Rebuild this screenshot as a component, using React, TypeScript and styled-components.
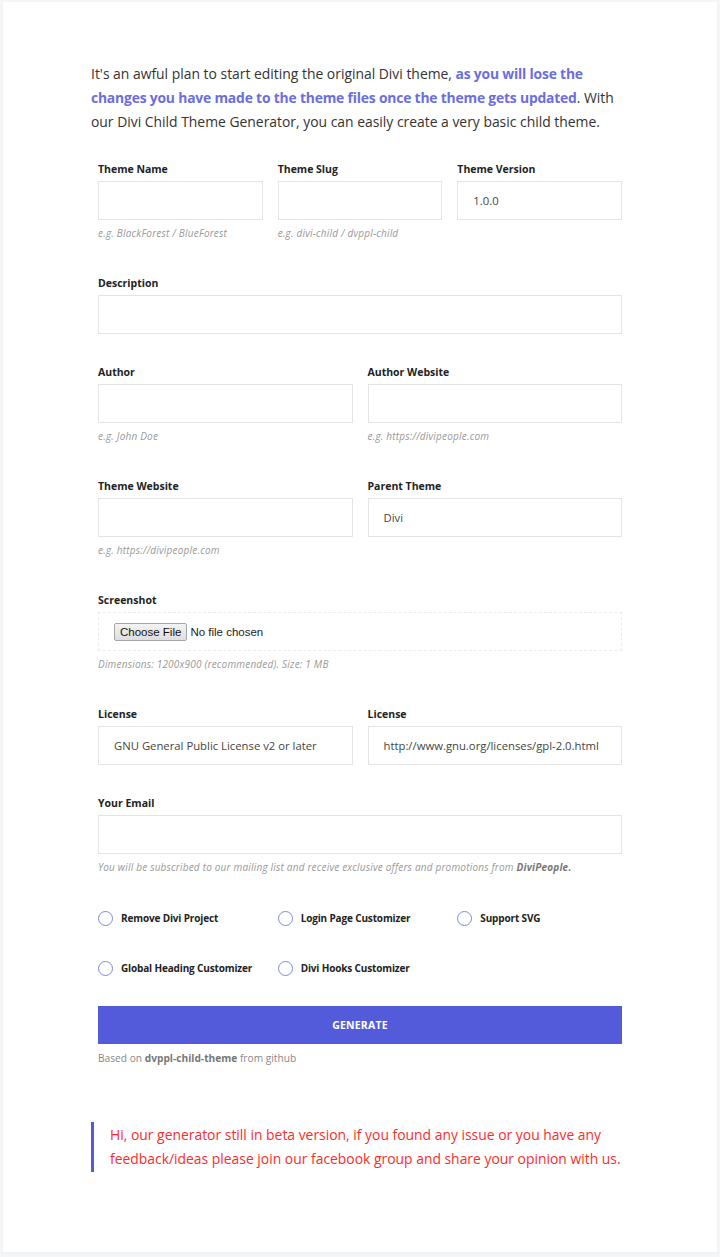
import React from "react";
import styled, { createGlobalStyle } from "styled-components";

const GlobalStyle = createGlobalStyle`
    html, body {
        margin: 0;
        padding: 0;
        background: #f5f6f8;
    }
    body {
        font-family: "Open Sans", "Liberation Sans", sans-serif;
        color: #333;
    }
    * {
        box-sizing: border-box;
    }
`;

const Card = styled.div`
    margin: 2px 3px 7px;
    background: #ffffff;
    box-shadow: 0 1px 4px rgba(0, 0, 0, 0.04);
    padding: 60px 88px 80px 88px;
`;

const Intro = styled.p`
    margin: 0 0 29px;
    font-size: 13.9px;
    line-height: 23.8px;
    color: #333;

    strong {
        color: #6b6ee0;
        font-weight: 700;
        letter-spacing: -0.2px;
    }
`;

const Form = styled.div`
    padding: 0 7px;
    display: flex;
    flex-direction: column;
`;

const Row = styled.div<{ $cols: number; $gap?: number }>`
    display: grid;
    grid-template-columns: repeat(${(p) => p.$cols}, 1fr);
    column-gap: 15px;
    margin-bottom: ${(p) => p.$gap ?? 37}px;
`;

const Field = styled.div`
    display: flex;
    flex-direction: column;
`;

const Label = styled.label`
    font-size: 10.5px;
    font-weight: 700;
    color: #222;
    line-height: 14px;
    margin-bottom: 5px;
`;

const Input = styled.input`
    height: 39px;
    width: 100%;
    border: 1px solid #e4e4e4;
    background: #fff;
    padding: 0 15px;
    font-family: inherit;
    font-size: 11.3px;
    color: #444;
    outline: none;
`;

const FileBox = styled.div`
    height: 39px;
    border: 1px dashed #ececec;
    display: flex;
    align-items: center;
    padding: 0 15px;
    font-family: Arial, "Liberation Sans", sans-serif;
    font-size: 11.5px;
    color: #222;
`;

const FileButton = styled.span`
    display: inline-block;
    padding: 2px 5px;
    border: 1px solid #a6a6a6;
    border-radius: 2px;
    background: linear-gradient(#f3f3f3, #dedede);
    margin-right: 3px;
    color: #111;
`;

const Help = styled.div`
    margin-top: 7px;
    font-size: 10px;
    letter-spacing: 0.2px;
    font-style: italic;
    color: #999;
    line-height: 12px;
    min-height: 12px;

    b {
        color: #777;
        font-weight: 700;
    }
`;

const Options = styled.div`
    display: grid;
    grid-template-columns: repeat(3, 1fr);
    column-gap: 15px;
    row-gap: 32px;
    margin-bottom: 29px;
`;

const Option = styled.label`
    display: flex;
    align-items: center;
    gap: 8px;
    font-size: 10px;
    letter-spacing: -0.15px;
    font-weight: 700;
    color: #222;
    white-space: nowrap;
    line-height: 18px;
`;

const Circle = styled.span`
    width: 15px;
    height: 15px;
    border-radius: 50%;
    border: 1px solid #7f86e6;
    flex: none;
`;

const Generate = styled.button`
    height: 38px;
    width: 100%;
    border: none;
    background: #535bdb;
    color: #fff;
    font-family: inherit;
    font-size: 10.5px;
    font-weight: 700;
    letter-spacing: 0.2px;
`;

const Credit = styled.div`
    margin-top: 7px;
    font-size: 10.2px;
    color: #888;

    b {
        color: #777;
    }
`;

const Note = styled.blockquote`
    margin: 57px 0 0;
    border-left: 3px solid #535bdb;
    padding: 1px 0 1px 16px;
    font-size: 13.9px;
    line-height: 24px;
    color: #ff2a2a;
`;

const Hint = ({ children }: { children?: React.ReactNode }) => <Help>{children}</Help>;

export default function App() {
    return (
        <>
            <GlobalStyle />
            <Card>
                <Intro>
                    It's an awful plan to start editing the original Divi theme,{" "}
                    <strong>
                        as you will lose the changes you have made to the theme files once the
                        theme gets updated
                    </strong>
                    . With our Divi Child Theme Generator, you can easily create a very basic
                    child theme.
                </Intro>

                <Form>
                    <Row $cols={3}>
                        <Field>
                            <Label>Theme Name</Label>
                            <Input />
                            <Hint>e.g. BlackForest / BlueForest</Hint>
                        </Field>
                        <Field>
                            <Label>Theme Slug</Label>
                            <Input />
                            <Hint>e.g. divi-child / dvppl-child</Hint>
                        </Field>
                        <Field>
                            <Label>Theme Version</Label>
                            <Input defaultValue="1.0.0" />
                        </Field>
                    </Row>

                    <Row $cols={1} $gap={31}>
                        <Field>
                            <Label>Description</Label>
                            <Input />
                        </Field>
                    </Row>

                    <Row $cols={2}>
                        <Field>
                            <Label>Author</Label>
                            <Input />
                            <Hint>e.g. John Doe</Hint>
                        </Field>
                        <Field>
                            <Label>Author Website</Label>
                            <Input />
                            <Hint>e.g. https://divipeople.com</Hint>
                        </Field>
                    </Row>

                    <Row $cols={2}>
                        <Field>
                            <Label>Theme Website</Label>
                            <Input />
                            <Hint>e.g. https://divipeople.com</Hint>
                        </Field>
                        <Field>
                            <Label>Parent Theme</Label>
                            <Input defaultValue="Divi" />
                        </Field>
                    </Row>

                    <Row $cols={1}>
                        <Field>
                            <Label>Screenshot</Label>
                            <FileBox>
                                <FileButton>Choose File</FileButton>No file chosen
                            </FileBox>
                            <Hint>Dimensions: 1200x900 (recommended). Size: 1 MB</Hint>
                        </Field>
                    </Row>

                    <Row $cols={2} $gap={31}>
                        <Field>
                            <Label>License</Label>
                            <Input defaultValue="GNU General Public License v2 or later" />
                        </Field>
                        <Field>
                            <Label>License</Label>
                            <Input defaultValue="http://www.gnu.org/licenses/gpl-2.0.html" />
                        </Field>
                    </Row>

                    <Row $cols={1} $gap={36}>
                        <Field>
                            <Label>Your Email</Label>
                            <Input />
                            <Hint>
                                You will be subscribed to our mailing list and receive exclusive
                                offers and promotions from <b>DiviPeople.</b>
                            </Hint>
                        </Field>
                    </Row>

                    <Options>
                        <Option>
                            <Circle />
                            Remove Divi Project
                        </Option>
                        <Option>
                            <Circle />
                            Login Page Customizer
                        </Option>
                        <Option>
                            <Circle />
                            Support SVG
                        </Option>
                        <Option>
                            <Circle />
                            Global Heading Customizer
                        </Option>
                        <Option>
                            <Circle />
                            Divi Hooks Customizer
                        </Option>
                    </Options>

                    <Generate>GENERATE</Generate>
                    <Credit>
                        Based on <b>dvppl-child-theme</b> from github
                    </Credit>
                </Form>

                <Note>
                    Hi, our generator still in beta version, if you found any issue or you have any
                    feedback/ideas please join our facebook group and share your opinion with us.
                </Note>
            </Card>
        </>
    );
}
